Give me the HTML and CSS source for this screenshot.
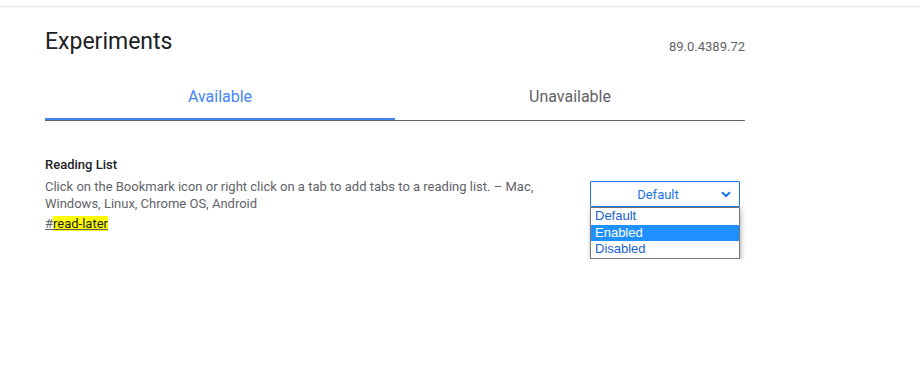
FILE: index.html
```html
<!DOCTYPE html>
<html lang="en">
<head>
    <meta charset="UTF-8">
    <title>Experiments</title>
    <link rel="stylesheet" href="styles.css">
</head>
<body>
    <div class="topbar"></div>
    <div class="page">
        <div class="header">
            <h1 class="title">Experiments</h1>
            <span class="version">89.0.4389.72</span>
        </div>
        <div class="tabs">
            <div class="tab active">Available</div>
            <div class="tab">Unavailable</div>
        </div>

        <div class="experiment">
            <div class="info">
                <h3 class="name">Reading List</h3>
                <p class="desc">Click on the Bookmark icon or right click on a tab to add tabs to a reading list. &ndash; Mac, Windows, Linux, Chrome OS, Android</p>
                <a class="permalink" href="#read-later">#<span class="match">read-later</span></a>
            </div>
            <div class="control">
                <div class="select">
                    <span>Default</span>
                    <svg class="chevron" width="10" height="7" viewBox="0 0 10 7"><path d="M1 1.2 L5 5 L9 1.2" fill="none" stroke="#1a73e8" stroke-width="2"/></svg>
                </div>
                <ul class="options">
                    <li>Default</li>
                    <li class="selected">Enabled</li>
                    <li>Disabled</li>
                </ul>
            </div>
        </div>
    </div>
</body>
</html>
```
FILE: styles.css
```css
*{
    margin: 0;
    padding: 0;
    box-sizing: border-box;
}

body{
    background: #fff;
    font-family: Roboto, "Liberation Sans", sans-serif;
    color: #202124;
}

.topbar{
    height: 6px;
    background: #fff;
    box-shadow: 0 1px 2px rgba(0,0,0,0.12);
}

.page{
    width: 700px;
    margin-left: 45px;
}

.header{
    display: flex;
    justify-content: space-between;
    align-items: flex-end;
    padding-top: 15px;
    height: 51px;
}

.title{
    font-size: 23px;
    font-weight: 400;
    line-height: 30px;
    color: #202124;
}

.version{
    font-size: 13px;
    color: #5f6368;
    line-height: 16px;
    padding-bottom: 2px;
}

.tabs{
    display: flex;
    margin-top: 24px;
    border-bottom: 1px solid #5f6368;
}

.tab{
    flex: 1;
    text-align: center;
    font-size: 16px;
    line-height: 20px;
    height: 39px;
    padding-top: 6px;
    color: #5f6368;
}

.tab.active{
    color: #4285f4;
    border-bottom: 2px solid #4285f4;
    margin-bottom: -1px;
}

.experiment{
    display: flex;
    justify-content: space-between;
    align-items: flex-start;
    margin-top: 36px;
}

.info{
    width: 500px;
    font-size: 13px;
}

.name{
    font-size: 13px;
    font-weight: 500;
    line-height: 16px;
    color: #202124;
}

.desc{
    margin-top: 5px;
    line-height: 17px;
    color: #5f6368;
}

.permalink{
    display: inline-block;
    margin-top: 4px;
    line-height: 16px;
    color: #5f6368;
    text-decoration: underline;
}

.match{
    background: #ffff00;
    color: #202124;
}

.control{
    width: 150px;
    margin-top: 24px;
    margin-right: 5px;
}

.select{
    height: 26px;
    border: 1px solid #1a73e8;
    border-radius: 1px;
    display: flex;
    align-items: center;
    justify-content: center;
    padding-right: 14px;
    font-size: 13px;
    color: #1a73e8;
    position: relative;
}

.chevron{
    position: absolute;
    right: 8px;
    top: 9px;
}

.options{
    width: 150px;
    list-style: none;
    background: #fff;
    border: 1px solid #767676;
    box-shadow: 1px 2px 5px rgba(0,0,0,0.3);
    font-family: "Liberation Sans", Arial, sans-serif;
    font-size: 13px;
    color: #1a5fd0;
}

.options li{
    height: 16.5px;
    line-height: 16px;
    padding-left: 4px;
}

.options li.selected{
    background: #1e90ff;
    color: #fff;
}
```
